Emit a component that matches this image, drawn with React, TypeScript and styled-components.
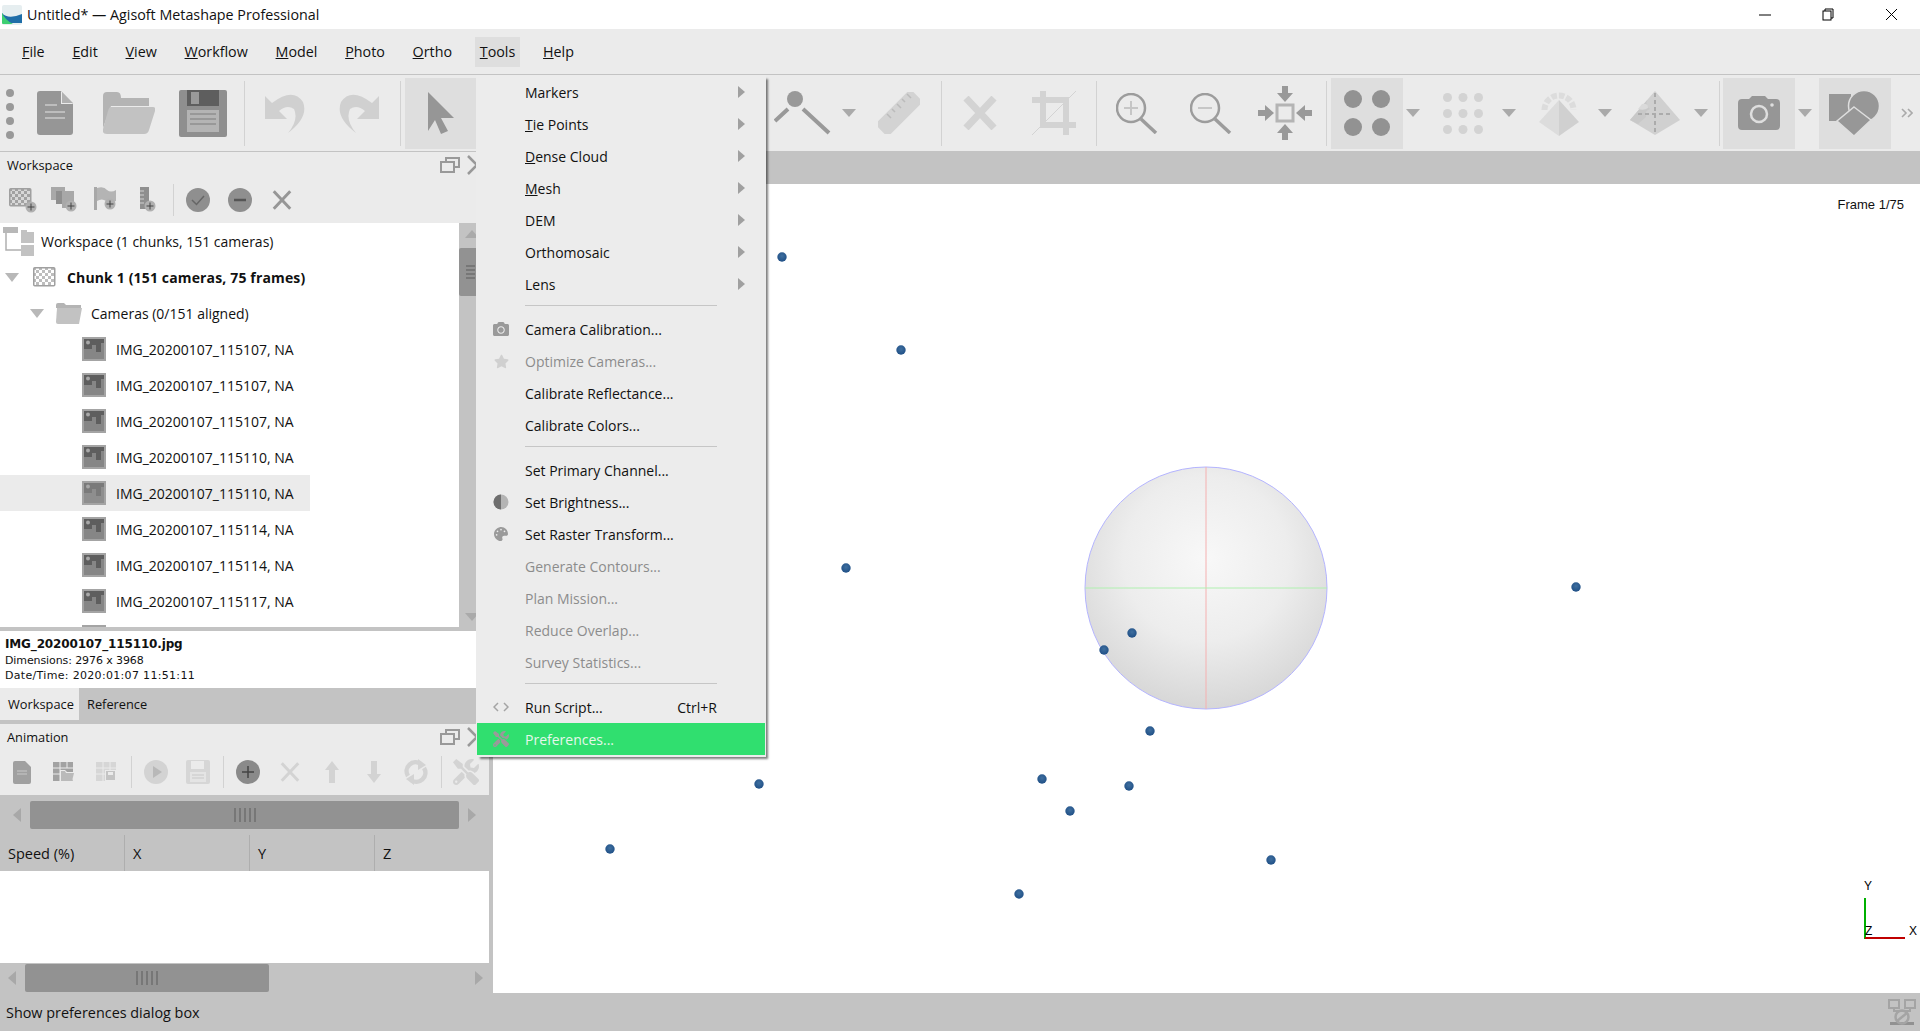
import React from 'react';
import styled, { createGlobalStyle } from 'styled-components';
import { FaCamera, FaPalette, FaStar, FaTools } from 'react-icons/fa';

const uiFont = '"Open Sans", "Noto Sans", sans-serif';

const GlobalStyle = createGlobalStyle`
  html, body { margin: 0; padding: 0; height: 100%; background: #fff; overflow: hidden; }
  #root { height: 100%; }
  * { box-sizing: border-box; }
`;

const Page = styled.div`
  position: relative;
  width: 1920px;
  height: 1031px;
  display: flex;
  flex-direction: column;
  font-family: ${uiFont};
  font-size: 14px;
  color: #111;
  overflow: hidden;
`;

const TitleBar = styled.div`
  height: 29px;
  background: #fff;
  display: flex;
  align-items: center;
  padding-left: 2px;
  gap: 5px;
`;
const TitleText = styled.span`
  font-size: 14.3px;
  flex: 1;
`;
const WinBtn = styled.div`
  width: 58px;
  height: 29px;
  display: flex;
  align-items: center;
  justify-content: center;
`;

const MenuBar = styled.div`
  height: 46px;
  background: #ebebeb;
  border-bottom: 1px solid #c3c3c3;
  display: flex;
  align-items: center;
  padding-left: 17px;
  gap: 17.75px;
  font-size: 14.3px;
`;
const MenuLabel = styled.div<{ $open?: boolean }>`
  height: 30px;
  line-height: 30px;
  padding: 0 5px;
  background: ${p => (p.$open ? '#dedede' : 'transparent')};
`;

const ToolBar = styled.div`
  height: 77px;
  background: #ebebeb;
  border-bottom: 1px solid #c3c3c3;
  display: flex;
  align-items: center;
  gap: 2px;
  padding-left: 2px;
`;
const Grip = styled.div`
  width: 15px;
  display: flex;
  flex-direction: column;
  align-items: center;
  gap: 6px;
  margin-top: 1px;
`;
const GripDot = styled.span`
  width: 8px;
  height: 8px;
  border-radius: 50%;
  background: #999;
`;
const ToolBtn = styled.div<{ $on?: boolean }>`
  width: 72px;
  height: 71px;
  flex: none;
  display: flex;
  align-items: center;
  justify-content: center;
  background: ${p => (p.$on ? '#dedede' : 'transparent')};
`;
const DropArrow = styled.div`
  width: 20px;
  flex: none;
  height: 8px;
  display: flex;
  justify-content: center;
  margin-left: -2px;
  margin-right: 2px;
  &::after {
    content: '';
    border-left: 7px solid transparent;
    border-right: 7px solid transparent;
    border-top: 8px solid #aaa;
  }
`;
const ToolSep = styled.div<{ $l?: number; $r?: number; $h?: number }>`
  width: 1px;
  height: ${p => p.$h ?? 65}px;
  flex: none;
  background: #d2d2d2;
  margin-left: ${p => p.$l ?? 3}px;
  margin-right: ${p => p.$r ?? 2}px;
`;
const HiddenTools = styled.div`
  width: 286px;
  flex: none;
`;
const MoreBtn = styled.div`
  width: 27px;
  display: flex;
  justify-content: center;
`;

const Body = styled.div`
  flex: 1;
  display: flex;
  min-height: 0;
`;
const Dock = styled.div`
  width: 489px;
  flex: none;
  display: flex;
  flex-direction: column;
  background: #ebebeb;
`;
const Splitter = styled.div`
  width: 4px;
  flex: none;
  background: #c3c3c3;
`;
const DockHeader = styled.div`
  height: 28px;
  display: flex;
  align-items: center;
  padding: 0 0 2px 7px;
  font-size: 12.8px;
`;
const DockTitle = styled.span`
  width: 433px;
`;
const DockTools = styled.div<{ $pad: number }>`
  height: 43px;
  display: flex;
  align-items: center;
  gap: 2px;
  padding-left: ${p => p.$pad}px;
  padding-bottom: 3px;
`;
const SmallBtn = styled.div`
  width: 40px;
  height: 40px;
  flex: none;
  display: flex;
  align-items: center;
  justify-content: center;
`;

const TreeWrap = styled.div`
  height: 404px;
  display: flex;
  background: #fff;
`;
const TreeList = styled.div`
  flex: 1;
  overflow: hidden;
`;
const TreeRow = styled.div<{ $indent: number; $selected?: boolean; $bold?: boolean }>`
  width: 310px;
  height: 36px;
  display: flex;
  align-items: center;
  padding-left: ${p => p.$indent}px;
  background: ${p => (p.$selected ? '#ebebeb' : 'transparent')};
  font-weight: ${p => (p.$bold ? 700 : 400)};
  letter-spacing: ${p => (p.$bold ? '0.15px' : '0')};
  white-space: nowrap;
`;
const TreeText = styled.span<{ $gap: number }>`
  margin-left: ${p => p.$gap}px;
  display: inline-flex;
`;
const TreeTwist = styled.span`
  width: 0;
  height: 0;
  border-left: 7px solid transparent;
  border-right: 7px solid transparent;
  border-top: 9px solid #b8b8b8;
`;
const VScroll = styled.div`
  width: 30px;
  flex: none;
  background: #c3c3c3;
  display: flex;
  flex-direction: column;
  align-items: flex-start;
`;
const VThumb = styled.div`
  width: 100%;
  height: 48px;
  background: #929292;
  margin-top: 10px;
  border-radius: 2px;
  display: flex;
  flex-direction: column;
  justify-content: center;
  gap: 2px;
  padding: 0 14px 0 7px;
`;
const GripLine = styled.span`
  height: 2px;
  background: #777;
`;
const VArrow = styled.span<{ $down?: boolean }>`
  width: 0;
  height: 0;
  margin: ${p => (p.$down ? 'auto 0 6px 6px' : '7px 0 0 6px')};
  border-left: 7px solid transparent;
  border-right: 7px solid transparent;
  ${p => (p.$down ? 'border-top: 8px solid #aaa;' : 'border-bottom: 8px solid #aaa;')}
`;

const SplitLine = styled.div`
  height: 4px;
  background: #c3c3c3;
`;
const InfoPane = styled.div`
  height: 57px;
  background: #fff;
  padding: 6px 0 0 5px;
  font-family: "DejaVu Sans", sans-serif;
  font-size: 11px;
  line-height: 15.5px;
  letter-spacing: -0.1px;
`;
const InfoName = styled.div`
  font-weight: 700;
  font-size: 12px;
  letter-spacing: -0.15px;
`;
const InfoDate = styled.div`
  letter-spacing: 0.32px;
`;
const TabBar = styled.div`
  height: 36px;
  background: #c3c3c3;
  display: flex;
  align-items: flex-start;
  font-size: 12.8px;
`;
const Tab = styled.div<{ $active?: boolean }>`
  height: 32px;
  line-height: 32px;
  padding: 0 8px;
  width: ${p => (p.$active ? '79px' : 'auto')};
  background: ${p => (p.$active ? '#ebebeb' : 'transparent')};
`;

const HScroll = styled.div<{ $h: number; $pad: number }>`
  height: ${p => p.$h}px;
  flex: none;
  background: #c3c3c3;
  display: flex;
  align-items: center;
  gap: 9px;
  padding-left: ${p => p.$pad}px;
`;
const HArrow = styled.span<{ $right?: boolean; $end?: boolean }>`
  width: 0;
  height: 0;
  border-top: 7px solid transparent;
  border-bottom: 7px solid transparent;
  ${p => (p.$right ? 'border-left: 8px solid #a8a8a8;' : 'border-right: 8px solid #a8a8a8;')}
  ${p => (p.$end ? 'margin-left: auto; margin-right: 6px;' : '')}
`;
const HThumb = styled.div<{ $w: number }>`
  width: ${p => p.$w}px;
  height: 28px;
  background: #929292;
  border-radius: 2px;
  display: flex;
  align-items: center;
  justify-content: center;
  gap: 3px;
`;
const GripBar = styled.span`
  width: 2px;
  height: 14px;
  background: #777;
`;

const TableHead = styled.div`
  height: 36px;
  background: #c3c3c3;
  display: grid;
  grid-template-columns: repeat(3, 125px) 1fr;
  font-size: 14.5px;
`;
const HeadCell = styled.div`
  display: flex;
  align-items: center;
  padding-left: 8px;
  border-right: 1px solid #aeaeae;
  &:last-child { border-right: 0; }
`;
const TableBody = styled.div`
  height: 92px;
  background: #fff;
`;

const Viewport = styled.div`
  flex: 1;
  display: flex;
  flex-direction: column;
  position: relative;
  min-width: 0;
`;
const ViewBand = styled.div`
  height: 32px;
  flex: none;
  background: #c3c3c3;
`;
const FrameLabel = styled.div`
  position: absolute;
  right: 16px;
  top: 45px;
  font-family: "Liberation Sans", sans-serif;
  font-size: 13px;
`;
const Scene = styled.svg`
  display: block;
  flex: 1;
  width: 100%;
  background: #fff;
`;

const StatusBar = styled.div`
  height: 38px;
  flex: none;
  background: #c3c3c3;
  display: flex;
  align-items: center;
  justify-content: space-between;
  padding: 0 4px 0 6px;
  font-size: 14.4px;
`;

const Menu = styled.div`
  position: absolute;
  left: 476px;
  top: 75px;
  width: 290px;
  height: 682px;
  background: #ececec;
  padding: 1px 1px 0;
  box-shadow: 3px 3px 2px -1px rgba(0, 0, 0, 0.5);
`;
const MenuRow = styled.div<{ $disabled?: boolean; $active?: boolean }>`
  height: 32px;
  display: flex;
  align-items: center;
  padding-left: 48px;
  position: relative;
  color: ${p => (p.$active ? '#e6f7eb' : p.$disabled ? '#8c8c8c' : '#111')};
  background: ${p => (p.$active ? '#30df6f' : 'transparent')};
`;
const MenuIcon = styled.span<{ $faint?: boolean }>`
  position: absolute;
  left: 12px;
  width: 24px;
  height: 20px;
  display: flex;
  align-items: center;
  justify-content: center;
  color: ${p => (p.$faint ? '#d0d0d0' : '#9a9a9a')};
`;
const MenuCaret = styled.span`
  margin-left: auto;
  margin-right: 20px;
  border-top: 6px solid transparent;
  border-bottom: 6px solid transparent;
  border-left: 7px solid #a0a0a0;
`;
const MenuShortcut = styled.span`
  margin-left: auto;
  margin-right: 48px;
`;
const MenuSep = styled.div`
  height: 13px;
  padding: 5px 48px 0;
  &::after {
    content: '';
    display: block;
    height: 1px;
    background: #c6c6c6;
  }
`;

const G = '#969696';
const L = '#d3d3d3';

const Logo = () => (
  <svg width="20" height="20" viewBox="0 0 20 20">
    <rect width="20" height="20" rx="2" fill="#e6eef0" />
    <path d="M0 8 Q6 15 20 9 V18 H0 Z" fill="#1f6ea8" />
    <path d="M0 8 Q3 15 11 19 H1 Q0 19 0 18 Z" fill="#3ecf72" />
  </svg>
);

const DocIcon = () => (
  <svg width="36" height="44" viewBox="0 0 36 44">
    <path d="M3 0 H24 L36 13 V41 Q36 44 33 44 H3 Q0 44 0 41 V3 Q0 0 3 0 Z" fill={G} />
    <path d="M24 0 L36 13 H24 Z" fill="#ebebeb" />
    <path d="M25 1 L36 12 H25 Z" fill="#b0b0b0" />
    <path d="M8 14 H20 M8 21 H28 M8 27 H28" stroke="#bdbdbd" strokeWidth="2" />
  </svg>
);
const FolderIcon = () => (
  <svg width="52" height="42" viewBox="0 0 52 42">
    <path d="M0 4 Q0 0 4 0 H14 Q18 0 18 6 H46 Q46 6 46 14 H8 L0 36 Z" fill="#b4b4b4" />
    <path d="M8 15 H50 Q53 15 52 19 L46 38 Q45 42 41 42 H4 Q-1 42 0 37 L5 19 Q6 15 8 15 Z" fill="#c2c2c2" />
  </svg>
);
const SaveIcon = () => (
  <svg width="48" height="47" viewBox="0 0 48 47">
    <rect width="48" height="47" rx="2" fill="#8f8f8f" />
    <rect x="8" y="0" width="32" height="16" fill="#5e5e5e" />
    <rect x="12" y="2" width="8" height="12" fill="#9a9a9a" />
    <rect x="8" y="20" width="32" height="22" fill="#b4b4b4" />
    <path d="M11 24 H37 M11 29 H37 M11 34 H37" stroke="#8f8f8f" strokeWidth="1.5" />
  </svg>
);
const UndoIcon = ({ flip }: { flip?: boolean }) => (
  <svg width="40" height="42" viewBox="0 0 40 42" style={flip ? { transform: 'scaleX(-1)' } : undefined}>
    <path d="M0 4 V27 H22 L14 19 Q22 12 29 17 Q34 28 23 41 Q44 25 38 10 Q28 -5 7 11 Z" fill="#d0d0d0" />
  </svg>
);
const CursorIcon = () => (
  <svg width="26" height="42" viewBox="0 0 26 42">
    <path d="M0 0 L26 26 H13 L20 39 L13 42 L7 28 L0 39 Z" fill={G} />
  </svg>
);
const RayIcon = () => (
  <svg width="58" height="44" viewBox="0 0 58 44">
    <circle cx="21" cy="8" r="8" fill="#999" />
    <path d="M1 30 L14 18 M29 18 L55 42" stroke="#999" strokeWidth="4" />
  </svg>
);
const RulerIcon = () => (
  <svg width="42" height="42" viewBox="0 0 42 42">
    <rect x="-4" y="12" width="50" height="18" rx="3" fill={L} transform="rotate(-45 21 21)" />
    <path d="M9 22 L13 26 M14 17 L17 20 M19 12 L23 16 M24 7 L27 10 M29 2 L33 6" stroke="#bbb" strokeWidth="1.5" />
  </svg>
);
const CrossIcon = ({ size, color, sw }: { size: number; color: string; sw: number }) => (
  <svg width={size} height={size} viewBox="0 0 34 34">
    <path d="M3 2 L31 32 M31 2 L3 32" stroke={color} strokeWidth={sw} />
  </svg>
);
const CropIcon = () => (
  <svg width="44" height="44" viewBox="0 0 44 44">
    <path d="M11 0 V34 H44 M0 9 H34 V44" stroke={L} strokeWidth="6" fill="none" />
    <path d="M0 44 L44 0" stroke={L} strokeWidth="1" />
  </svg>
);
const ZoomIcon = ({ plus }: { plus?: boolean }) => (
  <svg width="42" height="41" viewBox="0 0 42 41">
    <circle cx="15" cy="15" r="14" fill="none" stroke="#9c9c9c" strokeWidth="2.5" />
    <path d="M25 26 L40 40" stroke="#9c9c9c" strokeWidth="3.5" />
    <path d={plus ? 'M8 15 H22 M15 8 V22' : 'M8 15 H22'} stroke="#c6c6c6" strokeWidth="2" />
  </svg>
);
const FitIcon = () => (
  <svg width="54" height="54" viewBox="0 0 54 54">
    <rect x="19" y="19" width="16" height="16" fill="none" stroke="#b4b4b4" strokeWidth="3" />
    <path d="M24 0 H30 V7 H35 L27 16 L19 7 H24 Z M24 54 H30 V47 H35 L27 38 L19 47 H24 Z M0 24 V30 H7 V35 L16 27 L7 19 V24 Z M54 24 V30 H47 V35 L38 27 L47 19 V24 Z" fill="#999" />
  </svg>
);
const FourDots = () => (
  <svg width="46" height="46" viewBox="0 0 46 46">
    <circle cx="9" cy="9" r="9" fill="#929292" />
    <circle cx="37" cy="9" r="9" fill="#929292" />
    <circle cx="9" cy="37" r="9" fill="#929292" />
    <circle cx="37" cy="37" r="9" fill="#929292" />
  </svg>
);
const NineDots = () => (
  <svg width="40" height="41" viewBox="0 0 40 41">
    {[4.5, 20, 35.5].flatMap(x =>
      [4.5, 20.5, 36.5].map(y => <circle key={x + '-' + y} cx={x} cy={y} r="4.5" fill={L} />)
    )}
  </svg>
);
const PyramidIcon = () => (
  <svg width="40" height="48" viewBox="0 0 40 48">
    <path d="M5.5 21 A14.5 14.5 0 1 1 34.5 21" fill="none" stroke="#dcdcdc" strokeWidth="6" strokeDasharray="5.5 2" />
    <path d="M20 11 L0 33 L20 47 Z" fill="#dcdcdc" />
    <path d="M20 11 L40 33 L20 47 Z" fill="#d0d0d0" />
  </svg>
);
const DiamondIcon = () => (
  <svg width="50" height="44" viewBox="0 0 50 44">
    <path d="M25 0 L50 29 L25 44 L0 29 Z" fill="#d0d0d0" />
    <path d="M25 0 L0 29 L8 33 L16 26 Q14 20 20 18 Q14 14 18 8 Z" fill="#c8c8c8" />
    <path d="M12 13 Q18 12 18 17 Q14 20 8 18 Z" fill="#dadada" />
    <path d="M8 23 H42 M25 2 V44" stroke="#ababab" strokeWidth="2" strokeDasharray="4 3" />
  </svg>
);
const CameraIcon = () => (
  <svg width="42" height="34" viewBox="0 0 42 34">
    <path d="M4 3 H11 L14 0 H27 L30 3 H38 Q42 3 42 7 V30 Q42 34 38 34 H4 Q0 34 0 30 V7 Q0 3 4 3 Z" fill={G} />
    <circle cx="21" cy="18" r="8" fill="none" stroke="#dedede" strokeWidth="2.5" />
    <circle cx="34" cy="9" r="1.8" fill="#dedede" />
  </svg>
);
const ShapesIcon = () => (
  <svg width="52" height="46" viewBox="0 0 52 46">
    <rect x="0" y="4" width="22" height="27" fill="#979797" />
    <circle cx="35" cy="16" r="15.5" fill="#979797" stroke="#dedede" strokeWidth="1.5" />
    <path d="M25 17 L42 30 L25 46 L8 31 Z" fill="#979797" stroke="#dedede" strokeWidth="1.5" />
  </svg>
);
const ChevronsIcon = () => (
  <svg width="12" height="10" viewBox="0 0 12 10">
    <path d="M1 1 L5 5 L1 9 M7 1 L11 5 L7 9" stroke="#aaa" strokeWidth="1.6" fill="none" />
  </svg>
);
const FloatIcon = () => (
  <svg width="20" height="16" viewBox="0 0 20 16">
    <path d="M6 4 V1 H19 V10 H14" fill="none" stroke="#999" strokeWidth="2" />
    <rect x="1" y="5" width="13" height="10" fill="none" stroke="#999" strokeWidth="2" />
  </svg>
);
const CloseChevron = () => (
  <svg width="12" height="20" viewBox="0 0 12 20" style={{ marginLeft: 7 }}>
    <path d="M1 1 L10 10 L1 19" fill="none" stroke="#999" strokeWidth="2.5" />
  </svg>
);
const PlusBadge = ({ x, y }: { x: number; y: number }) => (
  <g>
    <circle cx={x} cy={y} r="5.5" fill="#b0b0b0" />
    <path d={`M${x - 3.5} ${y} H${x + 3.5} M${x} ${y - 3.5} V${y + 3.5}`} stroke="#444" strokeWidth="1" />
  </g>
);
const Checker = ({ w, h, id, light, dark }: { w: number; h: number; id: string; light: string; dark: string }) => (
  <>
    <defs>
      <pattern id={id} width="6" height="6" patternUnits="userSpaceOnUse">
        <rect width="6" height="6" fill={light} />
        <rect width="3" height="3" fill={dark} />
        <rect x="3" y="3" width="3" height="3" fill={dark} />
      </pattern>
    </defs>
    <rect x="0.75" y="0.75" width={w} height={h} rx="1" fill={`url(#${id})`} stroke="#a0a0a0" strokeWidth="1.5" />
  </>
);
const AddChunkIcon = () => (
  <svg width="28" height="25" viewBox="0 0 28 25">
    <Checker w={21} h={17} id="chk1" light="#d8d8d8" dark="#a2a2a2" />
    <PlusBadge x={22} y={19} />
  </svg>
);
const AddPhotosIcon = () => (
  <svg width="28" height="26" viewBox="0 0 28 26">
    <rect x="0" y="0" width="14" height="13" fill="#a8a8a8" />
    <rect x="5" y="4" width="14" height="13" fill="#8f8f8f" />
    <rect x="11" y="4" width="12" height="17" fill="#a8a8a8" />
    <PlusBadge x={20} y={19} />
  </svg>
);
const AddFlagIcon = () => (
  <svg width="26" height="26" viewBox="0 0 26 26">
    <rect x="0" y="0" width="3" height="23" fill="#a8a8a8" />
    <path d="M3 1 Q10 -1 13 3 Q17 6 22 3 V14 Q16 16 12 14 Q8 11 3 14 Z" fill="#b4b4b4" />
    <PlusBadge x={16} y={17} />
  </svg>
);
const AddRulerIcon = () => (
  <svg width="18" height="26" viewBox="0 0 18 26">
    <rect x="0" y="0" width="9" height="22" fill="#8f8f8f" />
    <path d="M0 4 H4 M0 8 H4 M0 12 H4 M0 16 H4" stroke="#d0d0d0" strokeWidth="1" />
    <PlusBadge x={10} y={19} />
  </svg>
);
const DiscIcon = ({ fill, children }: { fill: string; children: React.ReactNode }) => (
  <svg width="24" height="24" viewBox="0 0 24 24">
    <circle cx="12" cy="12" r="12" fill={fill} />
    {children}
  </svg>
);
const SmallDoc = () => (
  <svg width="18" height="23" viewBox="0 0 18 23">
    <path d="M2 0 H12 L18 6 V21 Q18 23 16 23 H2 Q0 23 0 21 V2 Q0 0 2 0 Z" fill="#a0a0a0" />
    <path d="M4 10 H14 M4 13 H14" stroke="#c8c8c8" strokeWidth="1" />
  </svg>
);
const TableOpen = () => (
  <svg width="22" height="20" viewBox="0 0 22 20">
    <rect width="20" height="19" fill="#a2a2a2" />
    <path d="M0 6 H20 M0 12 H20 M7 0 V19 M14 0 V6" stroke="#ebebeb" strokeWidth="1" />
    <path d="M7 8 H12 L14 10 H22 L19 20 H7 Z" fill="#ebebeb" />
    <path d="M8 9 H12 L13 11 H21 L19 19 H8 Z" fill="#bababa" />
  </svg>
);
const TableSave = () => (
  <svg width="20" height="20" viewBox="0 0 20 20">
    <rect width="20" height="19" fill="#d6d6d6" />
    <path d="M0 6 H20 M0 12 H20 M7 0 V19 M14 0 V19" stroke="#ebebeb" strokeWidth="1" />
    <rect x="9" y="8" width="11" height="11" fill="#ebebeb" />
    <rect x="10" y="9" width="9" height="9" fill="#c4c4c4" />
    <rect x="12" y="10" width="5" height="3" fill="#ebebeb" />
  </svg>
);
const SmallSave = () => (
  <svg width="24" height="24" viewBox="0 0 24 24">
    <rect width="24" height="24" rx="2" fill="#d6d6d6" />
    <rect x="5" y="1" width="13" height="8" fill="#ebebeb" />
    <rect x="4" y="12" width="16" height="10" fill="#e4e4e4" />
    <path d="M6 15 H18 M6 18 H18" stroke="#c8c8c8" />
  </svg>
);
const UpArrow = ({ down }: { down?: boolean }) => (
  <svg width="14" height="22" viewBox="0 0 14 22" style={down ? { transform: 'scaleY(-1)' } : undefined}>
    <path d="M7 0 L14 9 H10 V22 H4 V9 H0 Z" fill={L} />
  </svg>
);
const RefreshIcon = () => (
  <svg width="24" height="26" viewBox="0 0 24 26">
    <path d="M4 17 A9 9 0 0 1 17 5 M20 9 A9 9 0 0 1 7 21" fill="none" stroke={L} strokeWidth="4.5" />
    <path d="M14 0 L22 6 L14 11 Z M10 15 L2 20 L10 26 Z" fill={L} />
  </svg>
);

const TreeFolders = () => (
  <svg width="31" height="30" viewBox="0 0 31 30">
    <path d="M3 6 V24 H20" fill="none" stroke="#b0b0b0" strokeWidth="1.5" />
    <rect x="0" y="1" width="15" height="6" fill="#b8b8b8" />
    <path d="M18 4 H24 V6 H31 V17 H18 Z" fill="#c2c2c2" />
    <rect x="18" y="19" width="13" height="11" fill="#c2c2c2" />
  </svg>
);
const ChunkIcon = () => (
  <svg width="23" height="20" viewBox="0 0 23 20">
    <Checker w={21} h={18} id="chk2" light="#fff" dark="#bdbdbd" />
  </svg>
);
const FolderSmall = () => (
  <svg width="26" height="21" viewBox="0 0 26 21">
    <path d="M0 2 Q0 0 2 0 H8 L10 2 H25 V5 H0 Z" fill="#b4b4b4" />
    <path d="M1 5 H26 L23 21 H2 Q0 21 0 19 Z" fill="#c2c2c2" />
  </svg>
);
const PhotoIcon = ({ light }: { light?: boolean }) => (
  <svg width="24" height="24" viewBox="0 0 24 24">
    <rect width="24" height="24" fill="#a4a4a4" />
    <rect x="2" y="2" width="20" height="20" fill={light ? '#8e8e8e' : '#868686'} />
    <path d="M2 2 H22 V6 H19 V15 H14 V8 H10 V12 H2 Z" fill={light ? '#7a7a7a' : '#5e5e5e'} />
    <circle cx="6" cy="5.5" r="2" fill="#a8a8a8" />
  </svg>
);

const NoConnection = () => (
  <svg width="28" height="26" viewBox="0 0 28 26">
    <path d="M1 1 H11 V9 H1 Z M17 1 H27 V9 H17 Z" fill="none" stroke="#a4a4a4" strokeWidth="2" />
    <path d="M6 9 V12 H22 V9" fill="none" stroke="#a4a4a4" strokeWidth="2" />
    <rect x="2" y="23" width="24" height="3" fill="#919191" />
    <circle cx="14" cy="18" r="6.5" fill="none" stroke="#a4a4a4" strokeWidth="2.5" />
    <path d="M9 22 L19 14" stroke="#a4a4a4" strokeWidth="2.5" />
  </svg>
);

const imageNames = ['115107', '115107', '115107', '115110', '115110', '115114', '115114', '115117'];

type MenuEntry =
  | 'sep'
  | {
      label: React.ReactNode;
      icon?: React.ReactNode;
      disabled?: boolean;
      more?: boolean;
      shortcut?: string;
      active?: boolean;
    };

const menuEntries: MenuEntry[] = [
  { label: 'Markers', more: true },
  { label: <><u>T</u>ie Points</>, more: true },
  { label: <><u>D</u>ense Cloud</>, more: true },
  { label: <><u>M</u>esh</>, more: true },
  { label: 'DEM', more: true },
  { label: 'Orthomosaic', more: true },
  { label: 'Lens', more: true },
  'sep',
  { label: 'Camera Calibration...', icon: <MenuIcon><FaCamera size={16} /></MenuIcon> },
  { label: 'Optimize Cameras...', disabled: true, icon: <MenuIcon $faint><FaStar size={15} /></MenuIcon> },
  { label: 'Calibrate Reflectance...' },
  { label: 'Calibrate Colors...' },
  'sep',
  { label: 'Set Primary Channel...' },
  {
    label: 'Set Brightness...',
    icon: (
      <MenuIcon>
        <svg width="16" height="16" viewBox="0 0 16 16">
          <circle cx="8" cy="8" r="7.5" fill="#b4b4b4" />
          <path d="M8 .5 A7.5 7.5 0 0 0 8 15.5 Z" fill="#6e6e6e" />
        </svg>
      </MenuIcon>
    ),
  },
  { label: 'Set Raster Transform...', icon: <MenuIcon><FaPalette size={14} /></MenuIcon> },
  { label: 'Generate Contours...', disabled: true },
  { label: 'Plan Mission...', disabled: true },
  { label: 'Reduce Overlap...', disabled: true },
  { label: 'Survey Statistics...', disabled: true },
  'sep',
  {
    label: 'Run Script...',
    shortcut: 'Ctrl+R',
    icon: (
      <MenuIcon>
        <svg width="16" height="10" viewBox="0 0 16 10">
          <path d="M5 1 L1 5 L5 9 M11 1 L15 5 L11 9" fill="none" stroke="#a4a4a4" strokeWidth="1.5" />
        </svg>
      </MenuIcon>
    ),
  },
  { label: 'Preferences...', active: true, icon: <MenuIcon><FaTools size={16} /></MenuIcon> },
];

const markers = [
  [782, 257], [901, 350], [846, 568], [1576, 587], [1132, 633], [1104, 650], [1150, 731],
  [759, 784], [1042, 779], [1129, 786], [1070, 811], [610, 849], [1271, 860], [1019, 894],
];

const App = () => (
  <Page>
    <GlobalStyle />
    <TitleBar>
      <Logo />
      <TitleText>Untitled* — Agisoft Metashape Professional</TitleText>
      <WinBtn>
        <svg width="12" height="2" viewBox="0 0 12 2"><path d="M0 1 H12" stroke="#000" /></svg>
      </WinBtn>
      <WinBtn>
        <svg width="12" height="13" viewBox="0 0 12 13">
          <rect x="1" y="3" width="8" height="9" fill="#fff" stroke="#000" />
          <path d="M3 3 V1 H11 V10 H9" fill="none" stroke="#000" />
        </svg>
      </WinBtn>
      <WinBtn>
        <svg width="13" height="13" viewBox="0 0 13 13"><path d="M1 1 L12 12 M12 1 L1 12" stroke="#000" /></svg>
      </WinBtn>
    </TitleBar>

    <MenuBar>
      <MenuLabel><u>F</u>ile</MenuLabel>
      <MenuLabel><u>E</u>dit</MenuLabel>
      <MenuLabel><u>V</u>iew</MenuLabel>
      <MenuLabel><u>W</u>orkflow</MenuLabel>
      <MenuLabel><u>M</u>odel</MenuLabel>
      <MenuLabel><u>P</u>hoto</MenuLabel>
      <MenuLabel><u>O</u>rtho</MenuLabel>
      <MenuLabel $open><u>T</u>ools</MenuLabel>
      <MenuLabel><u>H</u>elp</MenuLabel>
    </MenuBar>

    <ToolBar>
      <Grip><GripDot /><GripDot /><GripDot /><GripDot /></Grip>
      <ToolBtn><DocIcon /></ToolBtn>
      <ToolBtn><FolderIcon /></ToolBtn>
      <ToolBtn><SaveIcon /></ToolBtn>
      <ToolSep />
      <ToolBtn><UndoIcon /></ToolBtn>
      <ToolBtn><UndoIcon flip /></ToolBtn>
      <ToolSep />
      <ToolBtn $on><CursorIcon /></ToolBtn>
      <HiddenTools />
      <ToolBtn><RayIcon /></ToolBtn>
      <DropArrow />
      <ToolBtn><RulerIcon /></ToolBtn>
      <ToolSep $l={4} $r={0} />
      <ToolBtn><CrossIcon size={34} color={L} sw={7} /></ToolBtn>
      <ToolBtn><CropIcon /></ToolBtn>
      <ToolSep $l={4} $r={2} />
      <ToolBtn><ZoomIcon plus /></ToolBtn>
      <ToolBtn><ZoomIcon /></ToolBtn>
      <ToolBtn><FitIcon /></ToolBtn>
      <ToolSep $l={3} $r={2} />
      <ToolBtn $on><FourDots /></ToolBtn>
      <DropArrow />
      <ToolBtn><NineDots /></ToolBtn>
      <DropArrow />
      <ToolBtn><PyramidIcon /></ToolBtn>
      <DropArrow />
      <ToolBtn><DiamondIcon /></ToolBtn>
      <DropArrow />
      <ToolSep $l={4} $r={1} />
      <ToolBtn $on><CameraIcon /></ToolBtn>
      <DropArrow />
      <ToolBtn $on><ShapesIcon /></ToolBtn>
      <MoreBtn><ChevronsIcon /></MoreBtn>
    </ToolBar>

    <Body>
      <Dock>
        <DockHeader>
          <DockTitle>Workspace</DockTitle>
          <FloatIcon />
          <CloseChevron />
        </DockHeader>
        <DockTools $pad={3}>
          <SmallBtn><AddChunkIcon /></SmallBtn>
          <SmallBtn><AddPhotosIcon /></SmallBtn>
          <SmallBtn><AddFlagIcon /></SmallBtn>
          <SmallBtn><AddRulerIcon /></SmallBtn>
          <ToolSep $l={2} $r={2} $h={32} />
          <SmallBtn>
            <DiscIcon fill="#8f8f8f"><path d="M6 12 L10.5 16.5 L18 8" fill="none" stroke="#666" strokeWidth="1.5" /></DiscIcon>
          </SmallBtn>
          <SmallBtn>
            <DiscIcon fill="#8f8f8f"><path d="M6 12 H18" stroke="#555" strokeWidth="2.5" /></DiscIcon>
          </SmallBtn>
          <SmallBtn><CrossIcon size={20} color={G} sw={5} /></SmallBtn>
        </DockTools>
        <TreeWrap>
          <TreeList>
            <TreeRow $indent={3}>
              <TreeFolders />
              <TreeText $gap={7}>Workspace (1 chunks, 151 cameras)</TreeText>
            </TreeRow>
            <TreeRow $indent={5} $bold>
              <TreeTwist />
              <TreeText $gap={14}><ChunkIcon /></TreeText>
              <TreeText $gap={11}>Chunk 1 (151 cameras, 75 frames)</TreeText>
            </TreeRow>
            <TreeRow $indent={30}>
              <TreeTwist />
              <TreeText $gap={12}><FolderSmall /></TreeText>
              <TreeText $gap={9}>Cameras (0/151 aligned)</TreeText>
            </TreeRow>
            {imageNames.map((n, i) => (
              <TreeRow key={i} $indent={82} $selected={i === 4}>
                <PhotoIcon light={i === 4} />
                <TreeText $gap={10}>IMG_20200107_{n}, NA</TreeText>
              </TreeRow>
            ))}
            <TreeRow $indent={82}><PhotoIcon /></TreeRow>
          </TreeList>
          <VScroll>
            <VArrow />
            <VThumb><GripLine /><GripLine /><GripLine /><GripLine /></VThumb>
            <VArrow $down />
          </VScroll>
        </TreeWrap>
        <SplitLine />
        <InfoPane>
          <InfoName>IMG_20200107_115110.jpg</InfoName>
          <div>Dimensions: 2976 x 3968</div>
          <InfoDate>Date/Time: 2020:01:07 11:51:11</InfoDate>
        </InfoPane>
        <TabBar>
          <Tab $active>Workspace</Tab>
          <Tab>Reference</Tab>
        </TabBar>
        <DockHeader>
          <DockTitle>Animation</DockTitle>
          <FloatIcon />
          <CloseChevron />
        </DockHeader>
        <DockTools $pad={2}>
          <SmallBtn><SmallDoc /></SmallBtn>
          <SmallBtn><TableOpen /></SmallBtn>
          <SmallBtn><TableSave /></SmallBtn>
          <ToolSep $h={32} />
          <SmallBtn>
            <DiscIcon fill={L}><path d="M9 6 L18 12 L9 18 Z" fill="#b8b8b8" /></DiscIcon>
          </SmallBtn>
          <SmallBtn><SmallSave /></SmallBtn>
          <ToolSep $h={32} />
          <SmallBtn>
            <DiscIcon fill="#8a8a8a"><path d="M6 12 H18 M12 6 V18" stroke="#444" strokeWidth="1.5" /></DiscIcon>
          </SmallBtn>
          <SmallBtn><CrossIcon size={20} color={L} sw={5} /></SmallBtn>
          <SmallBtn><UpArrow /></SmallBtn>
          <SmallBtn><UpArrow down /></SmallBtn>
          <SmallBtn><RefreshIcon /></SmallBtn>
          <ToolSep $h={32} />
          <SmallBtn><FaTools size={26} color={L} /></SmallBtn>
        </DockTools>
        <HScroll $h={40} $pad={13}>
          <HArrow />
          <HThumb $w={429}><GripBar /><GripBar /><GripBar /><GripBar /><GripBar /></HThumb>
          <HArrow $right />
        </HScroll>
        <TableHead>
          <HeadCell>Speed (%)</HeadCell>
          <HeadCell>X</HeadCell>
          <HeadCell>Y</HeadCell>
          <HeadCell>Z</HeadCell>
        </TableHead>
        <TableBody />
        <HScroll $h={30} $pad={8}>
          <HArrow />
          <HThumb $w={244}><GripBar /><GripBar /><GripBar /><GripBar /><GripBar /></HThumb>
          <HArrow $right $end />
        </HScroll>
      </Dock>
      <Splitter />
      <Viewport>
        <ViewBand />
        <FrameLabel>Frame 1/75</FrameLabel>
        <Scene viewBox="493 184 1427 809">
          <defs>
            <radialGradient id="ball" cx="0.5" cy="0.38" r="0.68">
              <stop offset="0" stopColor="#f8f8f8" />
              <stop offset="0.5" stopColor="#ededed" />
              <stop offset="1" stopColor="#d2d2d2" />
            </radialGradient>
            <radialGradient id="dot" cx="0.5" cy="0.4" r="0.6">
              <stop offset="0" stopColor="#3f6f9f" />
              <stop offset="1" stopColor="#1f4f86" />
            </radialGradient>
          </defs>
          <circle cx="1206" cy="588" r="121" fill="url(#ball)" stroke="#b4b4ff" strokeWidth="1" />
          <path d="M1206 467 V709" stroke="#f5b0b0" strokeWidth="1" />
          <path d="M1085 588 H1327" stroke="#b0f0b0" strokeWidth="1" />
          {markers.map(([x, y], i) => (
            <circle key={i} cx={x} cy={y} r="4.7" fill="url(#dot)" />
          ))}
          <path d="M1865 898 V939" stroke="#00b000" strokeWidth="2" />
          <path d="M1865 938 H1905" stroke="#c00000" strokeWidth="2" />
          <g fontFamily="Liberation Sans, sans-serif" fontSize="12" fill="#000">
            <text x="1864" y="890">Y</text>
            <text x="1909" y="935">X</text>
            <text x="1865" y="935">Z</text>
          </g>
        </Scene>
      </Viewport>
    </Body>

    <StatusBar>
      <span>Show preferences dialog box</span>
      <NoConnection />
    </StatusBar>

    <Menu>
      {menuEntries.map((entry, i) =>
        entry === 'sep' ? (
          <MenuSep key={i} />
        ) : (
          <MenuRow key={i} $disabled={entry.disabled} $active={entry.active}>
            {entry.icon}
            <span>{entry.label}</span>
            {entry.more && <MenuCaret />}
            {entry.shortcut && <MenuShortcut>{entry.shortcut}</MenuShortcut>}
          </MenuRow>
        )
      )}
    </Menu>
  </Page>
);

export default App;
